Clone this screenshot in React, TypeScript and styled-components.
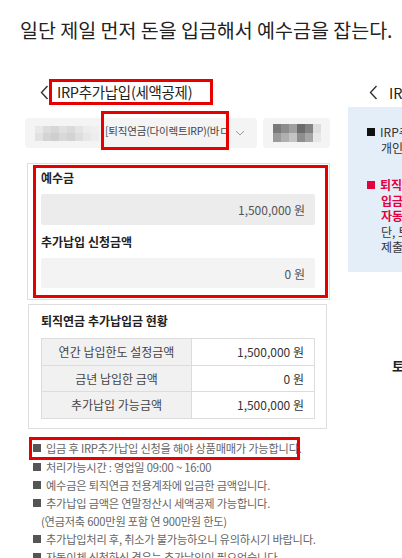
import React from 'react';
import styled, { createGlobalStyle } from 'styled-components';

const GlobalStyle = createGlobalStyle`
  body {
    margin: 0;
    background: #fff;
    font-family: "Noto Sans CJK KR", "Noto Sans", sans-serif;
    color: #222;
  }
`;

const ANNOT = '#e60000';

const Page = styled.div`
  width: 402px;
  height: 558px;
  overflow: hidden;
`;

const Headline = styled.h1`
  margin: 0;
  padding: 16px 0 0 20px;
  font-size: 19.5px;
  font-weight: 400;
  line-height: 28px;
  white-space: nowrap;
  color: #222;
`;

const Columns = styled.div`
  display: flex;
  margin-top: 16px;
`;

const LeftShot = styled.div`
  width: 320px;
  margin-left: 20px;
  flex-shrink: 0;
`;

const RightShot = styled.div`
  margin-left: 8px;
  flex: 1;
  min-width: 0;
  overflow: hidden;
`;

const TitleRow = styled.div<{ $pad: number }>`
  display: flex;
  align-items: center;
  margin-top: 19px;
  padding-left: ${(p) => p.$pad}px;
  height: 26px;
  white-space: nowrap;

  svg {
    flex-shrink: 0;
  }
`;

const TitleBox = styled.div`
  box-sizing: border-box;
  width: 164px;
  height: 26px;
  flex-shrink: 0;
  border: 3px solid ${ANNOT};
  padding: 0 5px;
  font-size: 14.5px;
  line-height: 20px;
  letter-spacing: -0.3px;
  color: #222;
  overflow: hidden;
`;

const TitleText = styled.span`
  font-size: 14.5px;
  color: #222;
  margin-left: 11px;
`;

const Chevron = ({ color = '#333' }: { color?: string }) => (
  <svg width="9" height="15" viewBox="0 0 9 15">
    <path d="M7.5 1 L1.5 7.5 L7.5 14" fill="none" stroke={color} strokeWidth="1.4" />
  </svg>
);

const DropRow = styled.div`
  display: flex;
  margin: 13px 0 0 5px;
  gap: 6px;
  height: 30px;
`;

const DropBox = styled.div<{ $w: number }>`
  width: ${(p) => p.$w}px;
  height: 30px;
  background: #f4f4f4;
  border-radius: 4px;
  display: flex;
  align-items: center;
  padding-left: 10px;
  box-sizing: border-box;
`;

const AcctName = styled.div`
  box-sizing: border-box;
  width: 128px;
  height: 39px;
  margin: -7px 0 -2px 2px;
  border: 3px solid ${ANNOT};
  display: flex;
  align-items: center;
  padding-left: 1px;
  font-size: 10.5px;
  color: #444;
  white-space: nowrap;
  overflow: hidden;
  letter-spacing: -0.2px;
`;

const Caret = styled.span`
  margin-left: 6px;
  display: flex;
`;

const PixelGrid = styled.div<{ $cols: number; $cw: number; $ch: number }>`
  display: grid;
  grid-template-columns: repeat(${(p) => p.$cols}, ${(p) => p.$cw}px);
  grid-auto-rows: ${(p) => p.$ch}px;
`;

const Pixel = styled.div<{ $c: string }>`
  background: ${(p) => p.$c};
`;

const Pixels = ({ rows, cw, ch }: { rows: string[][]; cw: number; ch: number }) => (
  <PixelGrid $cols={rows[0].length} $cw={cw} $ch={ch}>
    {rows.flat().map((c, i) => (
      <Pixel key={i} $c={c} />
    ))}
  </PixelGrid>
);

const blurA = [
  ['#e8e8e8', '#dcdcdc', '#d6d6d6', '#e0e0e0', '#dadada', '#e4e4e4', '#ececec', '#efefef'],
  ['#e2e2e2', '#d4d4d4', '#cfcfcf', '#d8d8d8', '#d3d3d3', '#dedede', '#e7e7e7', '#ededed'],
];

const blurB = [
  ['#7a7a7a', '#8d8d8d', '#a0a0a0', '#6c6c6c', '#838383', '#dedede'],
  ['#9a9a9a', '#b0b0b0', '#c4c4c4', '#8e8e8e', '#a6a6a6', '#e8e8e8'],
];

const Card = styled.div<{ $top: number; $left: number; $w: number }>`
  box-sizing: border-box;
  margin: ${(p) => p.$top}px 0 0 ${(p) => p.$left}px;
  width: ${(p) => p.$w}px;
  border: 1px solid #dedede;
`;

const Highlight = styled.div`
  margin: 1px 1px 1px 5px;
  border: 3px solid ${ANNOT};
  padding: 0 10px 0 5px;
`;

const FieldLabel = styled.div`
  font-size: 12px;
  font-weight: 700;
  color: #222;
  height: 20px;
  line-height: 20px;
`;

const Amount = styled.div<{ $bg: string; $h: number }>`
  height: ${(p) => p.$h}px;
  margin: 6px 0 7px;
  background: ${(p) => p.$bg};
  border-radius: 2px;
  display: flex;
  align-items: center;
  justify-content: flex-end;
  padding-right: 10px;
  font-size: 12px;
  color: #555;
`;

const StatusBody = styled.div`
  padding: 5px 11px 9px 12px;
`;

const StatusTitle = styled.div`
  font-size: 12px;
  font-weight: 700;
  color: #222;
  height: 22px;
  line-height: 22px;
  margin-bottom: 6px;
`;

const Table = styled.table`
  width: 100%;
  border-collapse: collapse;
  font-size: 12px;
`;

const Th = styled.th`
  width: 149px;
  height: 25.5px;
  padding: 0;
  background: #f1f1f1;
  border: 1px solid #dcdcdc;
  font-weight: 400;
  color: #444;
  text-align: center;
`;

const Td = styled.td`
  padding: 0 10px 0 0;
  border: 1px solid #dcdcdc;
  text-align: right;
  color: #333;
`;

const Notes = styled.ul`
  list-style: none;
  margin: 10px 0 0 13px;
  padding: 0;
  font-size: 11.2px;
  color: #666;
  letter-spacing: -0.2px;
`;

const Note = styled.li<{ $boxed?: boolean; $indent?: boolean }>`
  display: flex;
  align-items: center;
  height: 18px;
  white-space: nowrap;
  padding-left: ${(p) => (p.$indent ? 8 : 0)}px;
  ${(p) =>
    p.$boxed &&
    `
    box-sizing: border-box;
    width: 271px;
    height: 23px;
    margin: -2px 0 -2px -4px;
    padding-left: 1px;
    border: 3px solid ${ANNOT};
  `}
`;

const Square = styled.span<{ $c?: string }>`
  display: inline-block;
  width: 8px;
  height: 8px;
  background: ${(p) => p.$c || '#555'};
  margin-right: 5px;
  flex-shrink: 0;
`;

const InfoPanel = styled.div`
  margin-top: 2px;
  height: 165px;
  background: #e4eef8;
  padding: 17px 0 0 19px;
  box-sizing: border-box;
  font-size: 12px;
  line-height: 15.5px;
  white-space: nowrap;
  color: #333;
`;

const InfoLine = styled.div<{ $red?: boolean; $indent?: boolean }>`
  display: flex;
  align-items: center;
  padding-left: ${(p) => (p.$indent ? 14 : 0)}px;
  color: ${(p) => (p.$red ? '#e4003f' : '#333')};
  font-weight: ${(p) => (p.$red ? 700 : 400)};
`;

const Gap = styled.div<{ $h: number }>`
  height: ${(p) => p.$h}px;
`;

const SideHeading = styled.div`
  margin: 84px 0 0 44px;
  font-size: 13px;
  font-weight: 700;
  color: #222;
  white-space: nowrap;
`;

const statusRows = [
  ['연간 납입한도 설정금액', '1,500,000 원'],
  ['금년 납입한 금액', '0 원'],
  ['추가납입 가능금액', '1,500,000 원'],
];

export default function App() {
  return (
    <Page>
      <GlobalStyle />
      <Headline>일단 제일 먼저 돈을 입금해서 예수금을 잡는다.</Headline>
      <Columns>
        <LeftShot>
          <TitleRow $pad={20}>
            <Chevron />
            <TitleBox>IRP추가납입(세액공제)</TitleBox>
          </TitleRow>
          <DropRow>
            <DropBox $w={232}>
              <Pixels rows={blurA} cw={8} ch={7.5} />
              <AcctName>[퇴직연금(다이렉트IRP)(바ㄷ</AcctName>
              <Caret>
                <svg width="10" height="6" viewBox="0 0 10 6">
                  <path d="M1 1 L5 5 L9 1" fill="none" stroke="#999" strokeWidth="1" />
                </svg>
              </Caret>
            </DropBox>
            <DropBox $w={67}>
              <Pixels rows={blurB} cw={8} ch={9} />
            </DropBox>
          </DropRow>
          <Card $top={15} $left={7} $w={303}>
            <Highlight>
              <FieldLabel>예수금</FieldLabel>
              <Amount $bg="#ececec" $h={31}>1,500,000 원</Amount>
              <FieldLabel>추가납입 신청금액</FieldLabel>
              <Amount $bg="#f3f3f3" $h={30}>0 원</Amount>
            </Highlight>
          </Card>
          <Card $top={4} $left={8} $w={299}>
            <StatusBody>
              <StatusTitle>퇴직연금 추가납입금 현황</StatusTitle>
              <Table>
                <tbody>
                  {statusRows.map(([k, v]) => (
                    <tr key={k}>
                      <Th>{k}</Th>
                      <Td>{v}</Td>
                    </tr>
                  ))}
                </tbody>
              </Table>
            </StatusBody>
          </Card>
          <Notes>
            <Note $boxed>
              <Square />입금 후 IRP추가납입 신청을 해야 상품매매가 가능합니다.
            </Note>
            <Note>
              <Square />처리가능시간 : 영업일 09:00 ~ 16:00
            </Note>
            <Note>
              <Square />예수금은 퇴직연금 전용계좌에 입금한 금액입니다.
            </Note>
            <Note>
              <Square />추가납입 금액은 연말정산시 세액공제 가능합니다.
            </Note>
            <Note $indent>(연금저축 600만원 포함 연 900만원 한도)</Note>
            <Note>
              <Square />추가납입처리 후, 취소가 불가능하오니 유의하시기 바랍니다.
            </Note>
            <Note>
              <Square />자동이체 신청하신 경우는 추가납입이 필요없습니다.
            </Note>
          </Notes>
        </LeftShot>
        <RightShot>
          <TitleRow $pad={21}>
            <Chevron />
            <TitleText>IRP추가납입(세액공제)</TitleText>
          </TitleRow>
          <InfoPanel>
            <InfoLine>
              <Square $c="#111" />IRP추가납입은 연간 1,800만원까지
            </InfoLine>
            <InfoLine $indent>개인형 퇴직연금</InfoLine>
            <Gap $h={22} />
            <InfoLine $red>
              <Square $c="#e4003f" />퇴직연금 추가납입
            </InfoLine>
            <InfoLine $red $indent>입금 후 신청</InfoLine>
            <InfoLine $red $indent>자동이체 신청</InfoLine>
            <InfoLine $indent>단, 토요일 신청</InfoLine>
            <InfoLine $indent>제출 서류</InfoLine>
          </InfoPanel>
          <SideHeading>토요일</SideHeading>
        </RightShot>
      </Columns>
    </Page>
  );
}
